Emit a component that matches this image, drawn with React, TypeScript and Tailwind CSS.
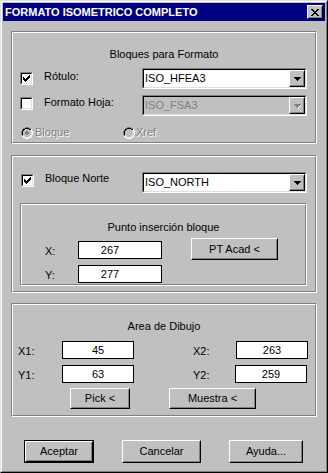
import React from "react";
import clsx from "clsx";

type PixProps = { rows: string[]; colors: Record<string, string>; className?: string };

// tiny pixel-art drawer for the win95 glyphs (check, radio, arrows, close X)
function Pixels({ rows, colors, className }: PixProps) {
  const w = rows[0].length;
  const h = rows.length;
  return (
    <svg
      width={w}
      height={h}
      viewBox={`0 0 ${w} ${h}`}
      shapeRendering="crispEdges"
      className={clsx("block shrink-0", className)}
    >
      {rows.flatMap((r, y) =>
        r.split("").map((c, x) =>
          colors[c] ? (
            <rect key={`${x}-${y}`} x={x} y={y} width={1} height={1} fill={colors[c]} />
          ) : null
        )
      )}
    </svg>
  );
}

const CHECK = [
  "......X",
  ".....XX",
  "X...XXX",
  "XX.XXX.",
  "XXXXX..",
  ".XXX...",
  "..X....",
];

const ARROW = ["XXXXXXX", ".XXXXX.", "..XXX..", "...X..."];
const ARROW_DIS = ["GGGGGGG.", ".GGGGGW.", "..GGGW..", "...GW...", "....W..."];

const CLOSE = [
  "XX....XX",
  ".XX..XX.",
  "..XXXX..",
  "...XX...",
  "..XXXX..",
  ".XX..XX.",
  "XX....XX",
];

const RADIO = [
  "....GGGG....",
  "..GGBBBBGG..",
  ".GBBFFFFBBW.",
  ".GBFFFFFFLW.",
  "GBFFFDDFFFLW",
  "GBFFDDDDFFLW",
  "GBFFDDDDFFLW",
  "GBFFFDDFFFLW",
  ".GLFFFFFFLW.",
  ".WLLFFFFLLW.",
  "..WWLLLLWW..",
  "....WWWW....",
];

function Raised({ className, children }: { className?: string; children?: React.ReactNode }) {
  return (
    <div className={clsx("border border-t-white border-l-white border-r-black border-b-black bg-[#c0c0c0]", className)}>
      <div className="flex h-full w-full items-center justify-center border border-t-[#c0c0c0] border-l-[#c0c0c0] border-r-[#808080] border-b-[#808080]">
        {children}
      </div>
    </div>
  );
}

function Button({ label, className, isDefault }: { label: string; className?: string; isDefault?: boolean }) {
  if (isDefault) {
    return (
      <div className={clsx("border border-black", className)}>
        <Raised className="h-full w-full">{label}</Raised>
      </div>
    );
  }
  return <Raised className={className}>{label}</Raised>;
}

function Group({ className, children }: { className?: string; children?: React.ReactNode }) {
  return (
    <div className={clsx("border border-t-[#808080] border-l-[#808080] border-r-white border-b-white", className)}>
      <div className="h-full border border-t-white border-l-white border-r-[#808080] border-b-[#808080]">
        {children}
      </div>
    </div>
  );
}

function Check({ checked, className }: { checked?: boolean; className?: string }) {
  return (
    <div className={clsx("h-[13px] w-[13px] shrink-0 border border-t-[#808080] border-l-[#808080] border-r-white border-b-white", className)}>
      <div className="flex h-full w-full items-center justify-center border border-t-black border-l-black border-r-[#dfdfdf] border-b-[#dfdfdf] bg-white">
        {checked && <Pixels rows={CHECK} colors={{ X: "#000" }} />}
      </div>
    </div>
  );
}

function Radio({ checked }: { checked?: boolean }) {
  return (
    <Pixels
      rows={RADIO}
      colors={{
        G: "#808080",
        B: "#000",
        W: "#fff",
        L: "#dfdfdf",
        F: "#c0c0c0",
        D: checked ? "#808080" : "#c0c0c0",
      }}
    />
  );
}

function Combo({ value, disabled }: { value: string; disabled?: boolean }) {
  return (
    <div className="h-[21px] w-[165px] border border-t-[#808080] border-l-[#808080] border-r-white border-b-white">
      <div
        className={clsx(
          "flex h-full w-full border border-t-black border-l-black border-r-[#dfdfdf] border-b-[#dfdfdf]",
          disabled ? "bg-[#c0c0c0]" : "bg-white"
        )}
      >
        <span className={clsx("flex flex-1 items-center pl-[1px]", disabled && "text-[#808080]")}>{value}</span>
        <Raised className="h-[17px] w-[16px]">
          {disabled ? (
            <Pixels rows={ARROW_DIS} colors={{ G: "#808080", W: "#fff" }} className="ml-[1px] mt-[1px]" />
          ) : (
            <Pixels rows={ARROW} colors={{ X: "#000" }} />
          )}
        </Raised>
      </div>
    </div>
  );
}

function Edit({ value, className }: { value: string; className?: string }) {
  return (
    <div className={clsx("flex h-[18px] items-center justify-center border border-black bg-white", className)}>
      {value}
    </div>
  );
}

export default function App() {
  return (
    <div className="h-[473px] w-[328px] font-['Liberation_Sans',Arial,sans-serif] text-[11px] leading-[13px] text-black">
      <div className="h-full border border-t-[#dfdfdf] border-l-[#dfdfdf] border-r-black border-b-black">
        <div className="h-full border border-t-white border-l-white border-r-[#808080] border-b-[#808080] bg-[#c0c0c0] p-px">
          {/* title bar */}
          <div className="flex h-[18px] items-center bg-[#000080] pl-[2px]">
            <span className="font-bold text-white">FORMATO ISOMETRICO COMPLETO</span>
            <Raised className="ml-auto mr-[2px] h-[14px] w-[16px]">
              <Pixels rows={CLOSE} colors={{ X: "#000" }} />
            </Raised>
          </div>

          {/* Bloques para Formato */}
          <Group className="ml-[8px] mt-[10px] h-[113px] w-[306px]">
            <p className="mt-[15px] text-center">Bloques para Formato</p>
            <div className="mt-[7px] flex h-[21px]">
              <div className="flex w-[129px] items-start pl-[7px]">
                <Check checked className="mt-[4px]" />
                <span className="ml-[11px] mt-[2px]">Rótulo:</span>
              </div>
              <Combo value="ISO_HFEA3" />
            </div>
            <div className="mt-[6px] flex h-[21px]">
              <div className="flex w-[129px] items-start pl-[7px]">
                <Check className="mt-[2px]" />
                <span className="ml-[11px] mt-[1px]">Formato Hoja:</span>
              </div>
              <Combo value="ISO_FSA3" disabled />
            </div>
            <div className="mt-[10px] flex h-[13px] items-center text-[#808080] [text-shadow:1px_1px_0_#fff]">
              <div className="flex w-[110px] items-center pl-[8px]">
                <Radio checked />
                <span className="ml-[2px]">Bloque</span>
              </div>
              <Radio />
              <span className="ml-[1px]">Xref</span>
            </div>
          </Group>

          {/* Bloque Norte */}
          <Group className="ml-[8px] mt-[11px] h-[138px] w-[306px]">
            <div className="mt-[15px] flex h-[21px]">
              <div className="flex w-[129px] items-start pl-[8px]">
                <Check checked className="mt-[2px]" />
                <span className="ml-[11px]">Bloque Norte</span>
              </div>
              <Combo value="ISO_NORTH" />
            </div>
            <Group className="ml-[7px] mt-[10px] h-[83px] w-[287px]">
              <p className="mt-[16px] text-center">Punto inserción bloque</p>
              <div className="mt-[4px] flex h-[22px] items-start pl-[23px]">
                <span className="mt-[7px] w-[33px]">X:</span>
                <Edit value="267" className="mt-[3px] w-[84px] pr-[20px]" />
                <Button label="PT Acad <" className="ml-[29px] h-[22px] w-[87px]" />
              </div>
              <div className="mt-[5px] flex h-[18px] items-start pl-[23px]">
                <span className="mt-[4px] w-[33px]">Y:</span>
                <Edit value="277" className="w-[84px] pr-[20px]" />
              </div>
            </Group>
          </Group>

          {/* Area de Dibujo */}
          <Group className="ml-[8px] mt-[10px] h-[114px] w-[306px]">
            <p className="mt-[15px] text-center">Area de Dibujo</p>
            <div className="mt-[8px] flex h-[18px] items-start pl-[5px]">
              <span className="mt-[4px] w-[44px]">X1:</span>
              <Edit value="45" className="w-[72px]" />
              <span className="ml-[59px] mt-[4px] w-[43px]">X2:</span>
              <Edit value="263" className="w-[72px]" />
            </div>
            <div className="mt-[6px] flex h-[18px] items-start pl-[5px]">
              <span className="mt-[4px] w-[44px]">Y1:</span>
              <Edit value="63" className="w-[72px]" />
              <span className="ml-[59px] mt-[4px] w-[42px]">Y2:</span>
              <Edit value="259" className="w-[72px]" />
            </div>
            <div className="mt-[5px] flex h-[21px]">
              <Button label="Pick <" className="ml-[57px] h-[21px] w-[60px]" />
              <Button label="Muestra <" className="ml-[39px] h-[21px] w-[87px]" />
            </div>
          </Group>

          {/* dialog buttons */}
          <div className="mt-[23px] flex h-[23px]">
            <Button label="Aceptar" isDefault className="ml-[21px] h-[23px] w-[70px]" />
            <Button label="Cancelar" className="ml-[28px] h-[23px] w-[79px]" />
            <Button label="Ayuda..." className="ml-[28px] h-[23px] w-[74px]" />
          </div>
        </div>
      </div>
    </div>
  );
}
